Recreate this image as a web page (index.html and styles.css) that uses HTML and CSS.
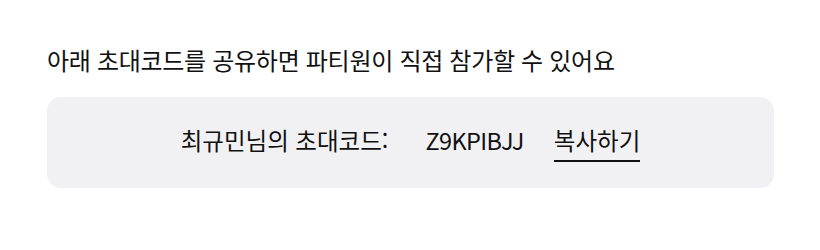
FILE: index.html
```html
<!DOCTYPE html>
<html lang="ko">
<head>
    <meta charset="UTF-8">
    <meta name="viewport" content="width=device-width, initial-scale=1.0">
    <title>초대코드</title>
    <link rel="stylesheet" href="styles.css">
</head>
<body>
    <div class="container">
        <p class="guide">아래 초대코드를 공유하면 파티원이 직접 참가할 수 있어요</p>
        <div class="code-box">
            <div class="code-line">
                <span class="label">최규민님의 초대코드:</span>
                <span class="code">Z9KPIBJJ</span>
                <button class="copy">복사하기</button>
            </div>
        </div>
    </div>
</body>
</html>
```
FILE: styles.css
```css
body {
    margin: 0;
    padding: 0;
    background-color: #fff;
    font-family: "Noto Sans CJK KR", "Noto Sans", sans-serif;
    color: #111;
}
.container {
    padding: 44px 46px 0 47px;
}
.guide {
    margin: 0 0 21px;
    font-size: 24px;
    line-height: 32px;
    letter-spacing: -0.3px;
}
.code-box {
    height: 91px;
    background-color: #f1f1f3;
    border-radius: 14px;
    display: flex;
    align-items: center;
    justify-content: center;
}
.code-line {
    display: flex;
    align-items: baseline;
    gap: 30px;
    font-size: 23.5px;
    line-height: 32px;
}
.code {
    margin-left: 7px;
    letter-spacing: -0.6px;
}
.copy {
    padding: 0 0 4px;
    background: none;
    border: none;
    border-bottom: 2px solid #111;
    font: inherit;
    color: inherit;
    cursor: pointer;
}
```
